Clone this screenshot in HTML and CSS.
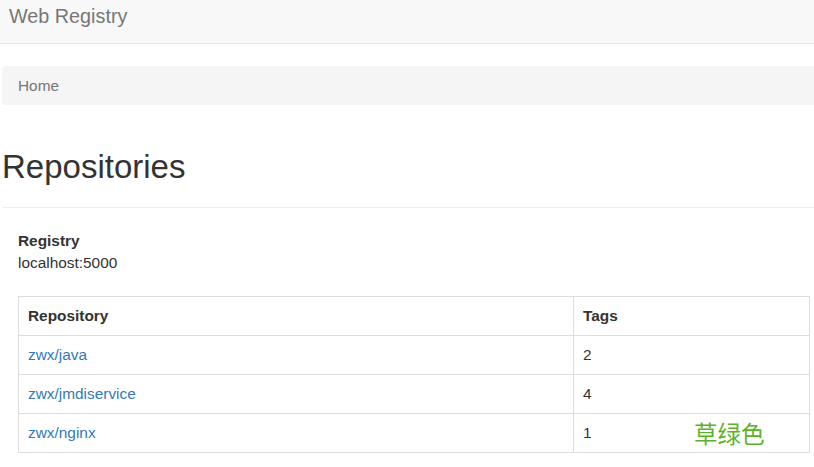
FILE: index.html
```html
<!DOCTYPE html>
<html lang="en">
<head>
  <meta charset="UTF-8">
  <meta name="viewport" content="width=device-width, initial-scale=1.0">
  <title>Web Registry</title>
  <link rel="stylesheet" href="styles.css">
</head>
<body>

  <!-- Top bar -->
  <nav class="navbar">
    <span class="navbar-brand">Web Registry</span>
  </nav>

  <div class="container">
    <!-- Breadcrumb -->
    <ol class="breadcrumb">
      <li class="active">Home</li>
    </ol>

    <h1 class="page-title">Repositories</h1>
    <hr>

    <div class="content">
      <dl class="registry-info">
        <dt>Registry</dt>
        <dd>localhost:5000</dd>
      </dl>

      <!-- Repository listing -->
      <table class="repo-table">
        <thead>
          <tr>
            <th class="col-repo">Repository</th>
            <th>Tags</th>
          </tr>
        </thead>
        <tbody>
          <tr>
            <td><a href="#">zwx/java</a></td>
            <td>2</td>
          </tr>
          <tr>
            <td><a href="#">zwx/jmdiservice</a></td>
            <td>4</td>
          </tr>
          <tr>
            <td><a href="#">zwx/nginx</a></td>
            <td class="tag-cell">1<span class="note">草绿色</span></td>
          </tr>
        </tbody>
      </table>
    </div>
  </div>

</body>
</html>
```

FILE: styles.css
```css
/* General Styling */
body {
  font-family: "Liberation Sans", Arial, sans-serif;
  font-size: 15.4px;
  line-height: 22px;
  color: #333;
  background-color: #fff;
  margin: 0;
  padding: 0;
  overflow: hidden;
}

a {
  color: #337ab7;
  text-decoration: none;
}

/* Navbar */
.navbar {
  height: 43px;
  background-color: #f8f8f8;
  border-bottom: 1px solid #e7e7e7;
}

.navbar-brand {
  display: block;
  padding: 5px 0 0 9px;
  font-size: 19.8px;
  line-height: 22px;
  color: #777;
}

/* Page container */
.container {
  margin-left: 2px;
  width: 830px;
}

.breadcrumb {
  list-style: none;
  margin: 22px 0 0;
  padding: 9px 16px 8px;
  background-color: #f5f5f5;
  border-radius: 4px;
  color: #777;
}

.page-title {
  margin: 44px 0 0;
  font-size: 33px;
  line-height: 36px;
  font-weight: normal;
  color: #333;
}

hr {
  margin: 22px 0 0;
  border: 0;
  border-top: 1px solid #eee;
}

.content {
  padding: 0 16px;
}

/* Registry details */
.registry-info {
  margin: 22px 0 0;
}

.registry-info dt {
  font-weight: bold;
}

.registry-info dd {
  margin: 0;
}

/* Repository table */
.repo-table {
  margin-top: 22px;
  width: 792px;
  border-collapse: collapse;
}

.repo-table th,
.repo-table td {
  border: 1px solid #ddd;
  padding: 8px 9px;
  line-height: 22px;
  text-align: left;
}

.repo-table th {
  font-weight: bold;
}

.col-repo {
  width: 536px;
}

.tag-cell {
  position: relative;
}

.note {
  position: absolute;
  left: 120px;
  top: 7px;
  font-family: "Noto Sans CJK SC", sans-serif;
  font-size: 23.5px;
  line-height: 24px;
  color: #5bb32a;
}
```
